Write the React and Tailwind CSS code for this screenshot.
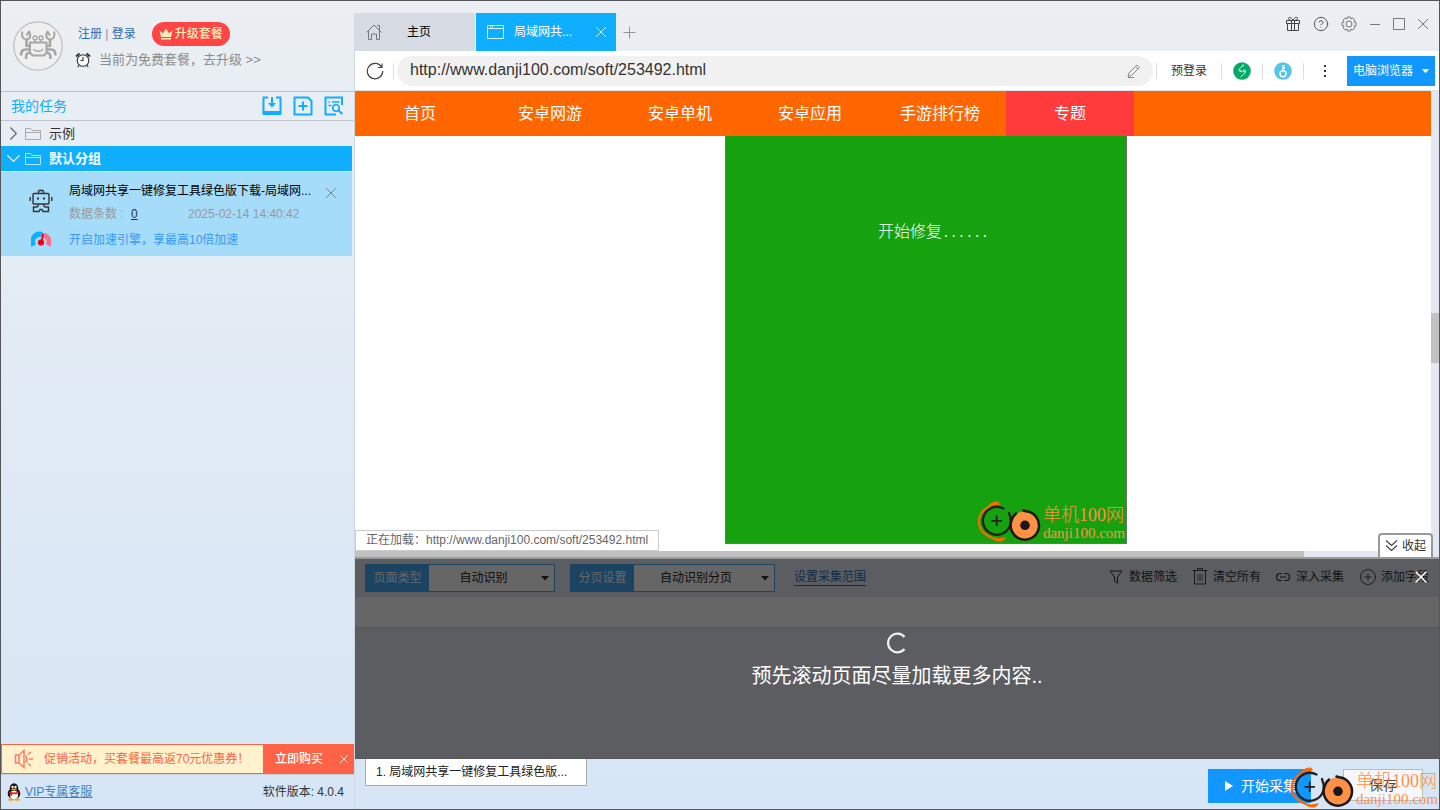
import React, { useState } from "react";
import { ChevronDown, ChevronRight, CircleHelp, CirclePlus, Plus, X } from "lucide-react";

const navItems = ["首页", "安卓网游", "安卓单机", "安卓应用", "手游排行榜", "专题"];

const CrabIcon = () => (
  <svg viewBox="0 0 50 50" className="h-[50px] w-[50px]" fill="none">
    <circle cx="25" cy="25" r="24.200" fill="#efefef" stroke="#bdbdbd" strokeWidth="1.200" />
    <g stroke="#a6a6a6" strokeWidth="2" strokeLinejoin="round">
      <path d="M17 21.500h16.500v10l-2.500 3H19.500l-2.500-3z" />
      <path d="M20.500 28c1.500 3 8 3 9.500 0" strokeWidth="1.300" />
      <path d="M22 21v-2.500M28 21v-2.500" strokeWidth="1.300" />
      <circle cx="22" cy="17" r="2" strokeWidth="1.300" />
      <circle cx="28" cy="17" r="2" strokeWidth="1.300" />
      <path d="M17 25h-3.500v-6M33.500 25H37v-6" strokeWidth="2.600" />
      <path d="M9.500 10.500c-1.500 4 0 7.500 4 8 4-.5 5-4 2.500-8l-2.500 4" />
      <path d="M41 10.500c1.500 4 0 7.500-4 8-4-.5-5-4-2.500-8l2.500 4" />
      <path d="M17 28.500h-4.500c-3 0-4.500 2-4.500 6M17.500 32h-2c-2 0-2.500 1.500-2.500 6M33.500 28.500H38c3 0 4.500 2 4.500 6M33 32h2c2 0 2.500 1.500 2.500 6" strokeWidth="2.600" />
    </g>
  </svg>
);

const AlarmIcon = () => (
  <svg viewBox="0 0 16 16" className="h-4 w-4" fill="none" stroke="#333" strokeWidth="1.100">
    <circle cx="8" cy="8.500" r="5.800" fill="#f8f8f8" />
    <path d="M8 5v3.500H5.500M4 13.200l-1.200 2M12 13.200l1.200 2" />
    <path d="M1 4.500 4.500 1.500M15 4.500 11.500 1.500" strokeWidth="2" />
  </svg>
);

const CrownIcon = () => (
  <svg viewBox="0 0 14 12" className="h-3 w-[14px]" fill="#ffedb8">
    <path d="M.5 2.500l3.500 2.700L7 .5l3 4.700 3.500-2.700L12 9H2z" />
    <rect x="2" y="10" width="10" height="1.500" />
  </svg>
);

const ImportIcon = () => (
  <svg viewBox="0 0 20 20" className="h-5 w-5" fill="none" stroke="#0faeff" strokeWidth="2">
    <path d="M6 1.500H1.500V17h17V1.500H14M10 1v8" />
    <path d="M6 7l4 4.500L14 7z" fill="#0faeff" stroke="none" />
    <path d="M.8 17h18.400" strokeWidth="4" />
  </svg>
);

const NewTaskIcon = () => (
  <svg viewBox="0 0 20 20" className="h-5 w-5" fill="none" stroke="#0faeff" strokeWidth="2" strokeLinejoin="round">
    <path d="M1.500 1.500H15l3.500 3.500v13.500h-17zM10 5.500v9M5.500 10h9" />
  </svg>
);

const SearchTaskIcon = () => (
  <svg viewBox="0 0 20 20" className="h-5 w-5" fill="none" stroke="#0faeff" strokeWidth="2">
    <path d="M18 9V1.500H1.500v17H12" />
    <path d="M4.500 6h1.500M8 6h7.500M4.500 9.500h3" strokeWidth="1.500" />
    <circle cx="12" cy="12" r="3.200" strokeWidth="1.600" />
    <path d="M14.500 14.500l4 3.500" />
  </svg>
);

const FolderIcon = ({ color }) => (
  <svg viewBox="0 0 16 14" className="h-[14px] w-4" fill="none" stroke={color}>
    <path d="M.5 12.500v-11h5l1.500 2h8.500v9zM.5 5.500h15" />
  </svg>
);

const RobotIcon = () => (
  <svg viewBox="0 0 24 24" className="h-6 w-6" fill="none" stroke="#333" strokeWidth="1.400">
    <rect x="4" y="4.500" width="16" height="10.500" rx="1" />
    <path d="M9.500 4V2.200C9.500 1 14.500 1 14.500 2.200V4M1.200 8v4M22.800 8v4M9.500 15c0 1.500-.5 2.500-1.500 3H4.500v4.500H10l1-2h2l1 2h5.500V18H16c-1-.5-1.500-1.500-1.500-3" />
    <path d="M8 9.500h2M14 9.500h2" strokeWidth="2" />
  </svg>
);

const GaugeIcon = () => (
  <svg viewBox="0 0 20 16" className="h-4 w-5" fill="none">
    <path d="M2.800 14.500A7.300 7.300 0 0 1 11 3.500" stroke="#0faeff" strokeWidth="5" />
    <path d="M13 4.200a7.300 7.300 0 0 1 4.200 10.300" stroke="#ff6f8a" strokeWidth="5" />
    <path d="M10.500 11 12.200 2.500" stroke="#e60012" strokeWidth="1.800" />
    <circle cx="10" cy="11.500" r="3.100" fill="#f50010" />
  </svg>
);

const SpeakerIcon = () => (
  <svg viewBox="0 0 20 20" className="h-5 w-5" fill="none" stroke="#ff7a62" strokeWidth="1.500">
    <path d="M1.500 6v8H5V6zM5 6l5-4.500v17L5 14M11.500 6.500c1.500 2 1.500 5 0 7M14 5.500l3-2.500M15 10h4M14 14.500l3 2.500" />
  </svg>
);

const PenguinIcon = () => (
  <svg viewBox="0 0 14 18" className="h-[18px] w-[14px]">
    <ellipse cx="7" cy="10.500" rx="6.300" ry="5.500" fill="#111" />
    <ellipse cx="7" cy="5.500" rx="4.300" ry="5.200" fill="#111" />
    <ellipse cx="7" cy="12" rx="4" ry="4.200" fill="#fff" />
    <circle cx="5.500" cy="4" r="1.200" fill="#fff" />
    <circle cx="8.500" cy="4" r="1.200" fill="#fff" />
    <ellipse cx="7" cy="6.500" rx="3" ry="1" fill="#f5a300" />
    <path d="M2.200 8.200c3 1.700 6.600 1.700 9.600 0v2c-3 1.500-6.600 1.500-9.600 0z" fill="#e6141e" />
    <path d="M3 9.500h2V13H3.500z" fill="#e6141e" />
    <ellipse cx="4" cy="16.600" rx="2.800" ry="1.200" fill="#f5a300" />
    <ellipse cx="10" cy="16.600" rx="2.800" ry="1.200" fill="#f5a300" />
  </svg>
);

const HomeIcon = () => (
  <svg viewBox="0 0 16 16" className="h-4 w-4" fill="none" stroke="#777">
    <path d="M.5 8.500 8 1l7.500 7.500M2.500 7v8.500h3V10h5v5.500h3V7M11 1.500h2.500V6" />
  </svg>
);

const WindowIcon = () => (
  <svg viewBox="0 0 17 14" className="h-[14px] w-[17px]" fill="none" stroke="#d8f1ff">
    <path d="M.5.500h16v13H.5zM.5 3.500h16M3.500.500v2M5.500.500v2" />
  </svg>
);

const ReloadIcon = () => (
  <svg viewBox="0 0 18 18" className="h-[18px] w-[18px]" fill="none" stroke="#444" strokeWidth="1.200">
    <path d="M15.500 5a7.700 7.700 0 1 0 1.200 4M12 5.500h4V1.500" />
  </svg>
);

const PencilIcon = () => (
  <svg viewBox="0 0 14 14" className="h-[14px] w-[14px]" fill="none" stroke="#888">
    <path d="M1 12.500l1-3.500L10 1l2.500 2.500-8 8zM8.500 2.500 11 5M1 13.500h6" />
  </svg>
);

const GiftIcon = () => (
  <svg viewBox="0 0 16 16" className="h-4 w-4" fill="none" stroke="#444">
    <path d="M1.500 4.500h13v3h-13zM2.500 7.500v7h11v-7M6.500 4.500v10M9.500 4.500v10M6.500 4.500C4 4 3 3 3.500 2S6 1 8 4c2-3 4-3 4.500-2S12 4 9.500 4.500" />
  </svg>
);

const GearIcon = () => (
  <svg viewBox="0 0 16 16" className="h-4 w-4" fill="none" stroke="#666" strokeWidth=".9">
    <path d="M6.500 1h3l.5 2 1.800-1 2.200 2.200-1 1.800 2 .5v3l-2 .5 1 1.800-2.200 2.200-1.800-1-.5 2h-3L6 13l-1.800 1L2 11.800 3 10l-2-.5v-3L3 6 2 4.200 4.200 2 6 3z" />
    <circle cx="8" cy="8" r="3" />
  </svg>
);

const LightningIcon = () => (
  <svg viewBox="0 0 18 18" className="h-[18px] w-[18px]" fill="none">
    <circle cx="9" cy="9" r="8.800" fill="#08a868" />
    <path d="M10 3 6 7.500l2 1.500h3l1.500 1.500-5 4.500M5.500 8.500l3 1.500" stroke="#c9f7e4" strokeWidth=".9" />
    <circle cx="10" cy="3.500" r="1" fill="#c9f7e4" />
    <circle cx="11.500" cy="9" r="1.200" stroke="#c9f7e4" strokeWidth=".8" />
  </svg>
);

const KeyIcon = () => (
  <svg viewBox="0 0 18 18" className="h-[18px] w-[18px]" fill="none">
    <circle cx="9" cy="9" r="8.800" fill="#56c4e8" />
    <circle cx="9" cy="11.800" r="3" stroke="#fff" strokeWidth="1.400" />
    <path d="M9 8.800V3M9 3.600h2M9 6h2" stroke="#fff" strokeWidth="1.300" />
  </svg>
);

const FunnelIcon = () => (
  <svg viewBox="0 0 14 14" className="h-[14px] w-[14px]" fill="none" stroke="currentColor">
    <path d="M1 1h12L8.500 7v6l-3-2V7z" />
  </svg>
);

const TrashIcon = () => (
  <svg viewBox="0 0 16 17" className="h-[17px] w-4" fill="none" stroke="currentColor" strokeWidth=".9">
    <path d="M.5 2.500h15M5.500 2.500V.500h5v2M2.500 2.500v13.500h11V2.500" />
    <path d="M6 6v7M8 6v7M10 6v7" strokeWidth=".6" />
  </svg>
);

const ChainIcon = () => (
  <svg viewBox="0 0 14 10" className="h-[10px] w-[14px]" fill="none" stroke="currentColor" strokeWidth="1.200">
    <path d="M6 1.500H4a3.500 3.500 0 0 0 0 7h2M8 1.500h2a3.500 3.500 0 0 1 0 7H8M4 5h6" />
  </svg>
);

const Caret = ({ className }) => (
  <svg viewBox="0 0 8 5" className={className} fill="currentColor">
    <path d="M0 0h8L4 4.500z" />
  </svg>
);

const SiteMark = () => (
  <div className="flex items-center pr-px">
    <svg viewBox="-1 0 66 42" className="h-[42px] w-[66px] shrink-0" fill="none">
      <path d="M12 5.500C5 8 .8 14 .8 20.500c0 8.500 7 15.500 18 17.500" stroke="#ff6a00" strokeWidth="2" />
      <path d="M8 7.500C11 3 14.500.5 19 .5c2 0 3 1.500 2.500 3.500C16 3.500 12 5 8 7.500zM13 37c4 1 9 .5 14.500-1-.5 4.500-7 7-14.500 1z" fill="#ff6a00" />
      <path d="M25.500 7.500A14 14 0 1 0 32.500 23c.5-3 .3-7-1.500-11" stroke="#222" strokeWidth="2.300" strokeLinecap="round" />
      <path d="M18.700 14.500v10.500M13.500 19.800H24" stroke="#222" strokeWidth="1.800" />
      <circle cx="47" cy="24.300" r="14" fill="#ff9147" />
      <path d="M45.500 9.500l2.500.8A14.200 14.200 0 1 1 33.500 19.500c1-3.500 2.500-5.500 4.500-7" stroke="#1d1718" strokeWidth="2.500" strokeLinecap="round" />
      <circle cx="47" cy="24.300" r="4.800" fill="#1d1718" />
    </svg>
    <div className="whitespace-nowrap pt-1 font-['Liberation_Serif','Noto_Sans_CJK_SC',serif] font-light text-[#ff9147]">
      <p className="text-lg leading-[18px]">单机100网</p>
      <p className="text-[15px] leading-[18px]">danji100.com</p>
    </div>
  </div>
);

const Sidebar = () => (
  <aside className="flex w-[353px] shrink-0 flex-col">
    <div className="flex h-[91px] items-center border-b border-[#bcc3cd] pl-3">
      <CrabIcon />
      <div className="ml-3 space-y-1">
        <div className="flex items-center text-xs text-[#2a6db5]">
          <div className="ml-[3px]">
            <a href="#register">注册</a> <span className="text-[#8a8fb5]">|</span>{" "}
            <a href="#login">登录</a>
          </div>
          <button className="ml-4 flex h-6 items-center gap-[2px] rounded-full bg-[#ff4545] px-[7px] font-medium text-[#ffedb8]">
            <CrownIcon />
            升级套餐
          </button>
        </div>
        <p className="flex items-center gap-2 text-[13px] leading-5 text-[#8c8c8c]">
          <AlarmIcon />
          <a href="#upgrade">当前为免费套餐，去升级 &gt;&gt;</a>
        </p>
      </div>
    </div>

    <div className="flex h-[29px] items-center border-b border-[#bcc3cd] px-[10px]">
      <h2 className="flex-1 text-sm text-[#0faeff]">我的任务</h2>
      <div className="flex items-center gap-[11px]">
        <button aria-label="导入任务"><ImportIcon /></button>
        <button aria-label="新建任务"><NewTaskIcon /></button>
        <button aria-label="搜索任务"><SearchTaskIcon /></button>
      </div>
    </div>

    <div className="mr-[2px]">
      <button className="flex h-[25px] w-full items-center pl-px text-[13px] text-[#333]">
        <ChevronRight size={23} strokeWidth={1.200} color="#666" />
        <FolderIcon color="#aaa" />
        <span className="ml-2">示例</span>
      </button>
      <button className="flex h-[25px] w-full items-center bg-[#0faeff] pl-px text-[13px] font-bold text-white">
        <ChevronDown size={23} strokeWidth={1.200} />
        <FolderIcon color="#b8e6ff" />
        <span className="ml-2">默认分组</span>
      </button>
      <div className="mt-px flex h-[84px] gap-4 bg-[#a5dcfa] pl-7 pr-3 text-xs">
        <div className="flex w-6 flex-col items-center pt-[17px]">
          <RobotIcon />
          <div className="mt-[18px]"><GaugeIcon /></div>
        </div>
        <div className="min-w-0 flex-1 pt-[10px]">
          <div className="flex items-center justify-between">
            <p className="whitespace-nowrap leading-[18px] text-black">
              局域网共享一键修复工具绿色版下载-局域网...
            </p>
            <button aria-label="删除任务" className="mt-1 h-[14px] text-[#666]">
              <X size={18} strokeWidth={1} className="-mt-[2px]" />
            </button>
          </div>
          <div className="mt-[5px] flex leading-[18px] text-[#999]">
            <p className="w-[119px]">
              数据条数 : <a href="#data" className="ml-1 text-[#333] underline">0</a>
            </p>
            <p>2025-02-14 14:40:42</p>
          </div>
          <a href="#boost" className="mt-2 block leading-[18px] text-[#3399ff]">
            开启加速引擎，享最高10倍加速
          </a>
        </div>
      </div>
    </div>

    <div className="flex-1" />

    <div className="flex h-[30px] items-center border border-[#ff6347] bg-[#fff2cc] pl-3 text-xs">
      <SpeakerIcon />
      <p className="ml-[10px] flex-1 text-[#ff6347]">促销活动，买套餐最高返70元优惠券！</p>
      <div className="flex h-full w-[90px] items-center justify-between bg-[#ff6347] pl-3 pr-[2px] text-white">
        <button className="font-medium">立即购买</button>
        <button aria-label="关闭活动"><X size={14} strokeWidth={1.500} /></button>
      </div>
    </div>
    <div className="flex h-[35px] items-center border-t border-[#c8d0da] pl-[6px] pr-[10px] text-xs">
      <PenguinIcon />
      <a href="#vip" className="ml-1 flex-1 text-[#3b84c4] underline">VIP专属客服</a>
      <p className="text-[#333]">软件版本: 4.0.4</p>
    </div>
  </aside>
);

const TitleBar = () => (
  <div className="flex h-[50px] justify-between pt-3">
    <div className="flex items-stretch text-xs">
      <button className="mr-px flex w-[121px] items-center bg-[#d7dce4] pl-3 text-black">
        <HomeIcon />
        <span className="ml-[25px]">主页</span>
      </button>
      <div className="flex w-[140px] items-center bg-[#0faeff] pl-[11px] pr-[6px] text-white">
        <WindowIcon />
        <button className="ml-[10px] flex-1 text-left">局域网共...</button>
        <button aria-label="关闭标签"><X size={18} strokeWidth={1.200} /></button>
      </div>
      <button aria-label="新标签" className="ml-1 text-[#888]">
        <Plus size={19} strokeWidth={1.100} />
      </button>
    </div>
    <div className="flex h-[22px] items-center gap-3 pr-[10px] text-[#555]">
      <button aria-label="礼物"><GiftIcon /></button>
      <button aria-label="帮助"><CircleHelp size={16} strokeWidth={1.500} /></button>
      <button aria-label="设置"><GearIcon /></button>
      <button aria-label="最小化">
        <svg viewBox="0 0 12 12" className="h-3 w-3" stroke="#777"><path d="M1 6.500h10" /></svg>
      </button>
      <button aria-label="最大化">
        <svg viewBox="0 0 12 12" className="h-3 w-3" fill="none" stroke="#777"><path d="M.5.500h11v11H.5z" /></svg>
      </button>
      <button aria-label="关闭">
        <svg viewBox="0 0 12 12" className="h-3 w-3" stroke="#777"><path d="M1 1l10 10M11 1 1 11" /></svg>
      </button>
    </div>
  </div>
);

const AddressBar = () => {
  const [url, setUrl] = useState("http://www.danji100.com/soft/253492.html");

  return (
    <div className="flex h-10 items-center border-b border-[#dfe3e8] bg-white pr-1 text-xs text-[#333]">
      <button aria-label="刷新" className="ml-[11px]"><ReloadIcon /></button>
      <span className="ml-[9px] h-4 w-px bg-[#ddd]" />
      <div className="ml-[3px] flex h-[30px] flex-1 items-center rounded-full bg-[#f1f1f1] pl-[13px] pr-3">
        <input
          aria-label="网址"
          value={url}
          onChange={(e) => setUrl(e.target.value)}
          className="min-w-0 flex-1 bg-transparent pb-[2px] text-base text-[#333] outline-none"
        />
        <button aria-label="编辑网址"><PencilIcon /></button>
      </div>
      <span className="ml-[3px] h-4 w-px bg-[#ddd]" />
      <button className="px-[14px]">预登录</button>
      <span className="h-4 w-px bg-[#ddd]" />
      <button aria-label="加速" className="px-[11px]"><LightningIcon /></button>
      <span className="h-4 w-px bg-[#ddd]" />
      <button aria-label="密钥" className="px-[11px]"><KeyIcon /></button>
      <span className="h-4 w-px bg-[#ddd]" />
      <button aria-label="更多" className="ml-5 mr-[21px] flex flex-col gap-[3px]">
        <span className="h-[2px] w-[2px] bg-[#333]" />
        <span className="h-[2px] w-[2px] bg-[#333]" />
        <span className="h-[2px] w-[2px] bg-[#333]" />
      </button>
      <button className="mt-px flex h-[30px] w-[88px] items-center justify-between bg-[#1296ff] px-[6px] text-white">
        电脑浏览器
        <Caret className="h-[5px] w-[7px]" />
      </button>
    </div>
  );
};

const WebView = () => (
  <div className="relative flex flex-1 flex-col bg-white">
    <div className="flex flex-1">
      <div className="min-w-0 flex-1 overflow-hidden">
        <nav className="flex h-[45px] bg-[#ff6600] pt-px text-base text-white">
          {navItems.map((item, i) => (
            <a
              key={item}
              href="#nav"
              className={`flex shrink-0 items-center justify-center ${
                i === navItems.length - 1 ? "-mt-px ml-px w-32 bg-[#ff3b3b]" : "w-[130px]"
              }`}
            >
              {item}
            </a>
          ))}
        </nav>
        <div className="ml-[370px] flex h-[408px] w-[402px] flex-col justify-between border border-t-0 border-[#5f7a5f] bg-[#16a10e]">
          <p className="ml-[152px] mt-[84px] text-base font-light text-white">
            开始修复<span className="font-['Liberation_Mono',monospace] text-[13px]">......</span>
          </p>
          <div className="flex justify-end"><SiteMark /></div>
        </div>
      </div>
      <div className="w-2 bg-[#e3e8f0] pt-[222px]">
        <div className="h-[50px] bg-[#c1c1c1]" />
      </div>
    </div>
    <div className="h-[6px] bg-[#e3e8f0]">
      <div className="h-full w-7/8 bg-[#c1c1c1]" />
    </div>
    <p className="absolute bottom-[6px] left-0 border border-[#ccc] bg-white px-[10px] text-xs leading-[19px] text-[#666]">
      正在加载：http://www.danji100.com/soft/253492.html
    </p>
    <button className="absolute bottom-0 right-[6px] flex h-6 items-center gap-1 rounded-t-sm border-2 border-b-0 border-[#999] bg-white px-[5px] text-xs text-[#333]">
      <svg viewBox="0 0 13 12" className="h-3 w-[13px]" fill="none" stroke="#444" strokeWidth="1.200">
        <path d="M1 .5l5.500 5 5.500-5M1 5.500l5.500 5 5.500-5" />
      </svg>
      收起
    </button>
  </div>
);

const PickField = ({ id, label, value, className }) => (
  <div className={`flex h-7 border border-[#44a8f5] bg-white text-xs ${className}`}>
    <label htmlFor={id} className="flex w-[63px] items-center justify-center bg-[#44a8f5] text-white">
      {label}
    </label>
    <div className="relative flex-1">
      <select id={id} className="h-full w-full appearance-none pr-4 text-[#222] [text-align-last:center]">
        <option>{value}</option>
      </select>
      <Caret className="pointer-events-none absolute right-[5px] top-[11px] h-[5px] w-2" />
    </div>
  </div>
);

const DataPanel = () => (
  <section className="relative flex h-[201px] flex-col border-t-2 border-[#999] bg-[#e6e8f2]">
    <div className="flex h-[38px] items-center justify-between px-[10px] text-xs text-[#333]">
      <div className="flex items-center">
        <PickField id="pageType" label="页面类型" value="自动识别" className="w-[190px]" />
        <PickField id="pager" label="分页设置" value="自动识别分页" className="ml-[15px] w-[205px]" />
        <a href="#range" className="ml-[19px] border-b border-[#2a72b8] leading-[15px] text-[#2a72b8]">
          设置采集范围
        </a>
      </div>
      <div className="flex items-center gap-[15px] pb-[3px]">
        <button className="flex items-center gap-[6px]"><FunnelIcon />数据筛选</button>
        <button className="flex items-center gap-[5px]"><TrashIcon />清空所有</button>
        <button className="flex items-center gap-[6px]"><ChainIcon />深入采集</button>
        <button className="flex items-center gap-1"><CirclePlus size={18} strokeWidth={1.200} />添加字段</button>
      </div>
    </div>
    <div className="h-[31px] border-b border-[#d5d9d0] bg-white" />

    {/* Loading mask */}
    <div className="absolute inset-0 flex flex-col items-center justify-center gap-2 bg-black/60 pt-1 text-white">
      <svg viewBox="0 0 22 22" className="h-[22px] w-[22px]" fill="none" stroke="#f0f0f0" strokeWidth="2.200">
        <path d="M18.500 5A9.300 9.300 0 1 0 18.500 17" />
      </svg>
      <p className="text-xl leading-7">预先滚动页面尽量加载更多内容..</p>
      <button aria-label="关闭加载" className="absolute right-2 top-2">
        <X size={20} strokeWidth={1.800} />
      </button>
    </div>
  </section>
);

const ActionBar = () => (
  <footer className="relative flex h-[51px] items-start justify-between border-t border-[#55575a] pl-[10px] pr-4">
    <button className="h-[27px] w-[222px] border border-t-0 border-[#aaa] bg-white pl-[10px] text-left text-xs text-[#222]">
      1. 局域网共享一键修复工具绿色版...
    </button>
    <div className="mt-[10px] flex gap-8">
      <button className="flex h-[34px] w-[103px] items-center gap-2 bg-[#1296ff] pl-[17px] text-sm text-white">
        <svg viewBox="0 0 8 10" className="h-[10px] w-2 shrink-0" fill="#fff">
          <path d="M0 0l8 5-8 5z" />
        </svg>
        <span className="whitespace-nowrap">开始采集</span>
      </button>
      <button className="h-8 w-20 border border-[#bbb] bg-[#f5f7fa] text-sm text-[#444]">保存</button>
    </div>
    <div className="pointer-events-none absolute bottom-0 right-0">
      <SiteMark />
    </div>
  </footer>
);

const App = () => {
  return (
    <div className="flex min-h-screen border border-[#55565a] bg-linear-to-b from-[#ebeff3] to-[#d6e6f6] font-['Liberation_Sans','Noto_Sans_CJK_SC',sans-serif]">
      <Sidebar />
      <main className="flex min-w-0 flex-1 flex-col">
        <TitleBar />
        <div className="flex flex-1 flex-col border-l border-[#ccd6e0]">
          <AddressBar />
          <WebView />
          <DataPanel />
          <ActionBar />
        </div>
      </main>
    </div>
  );
};

export default App;
